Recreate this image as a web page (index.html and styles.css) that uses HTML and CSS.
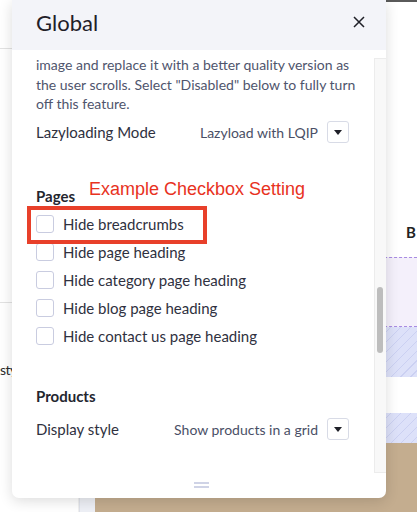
FILE: index.html
```html
<!DOCTYPE html>
<html lang="en">
<head>
    <meta charset="UTF-8">
    <title>Theme Styles - Global</title>
    <link rel="stylesheet" href="styles.css">
</head>
<body>
    <div class="page">
        <aside class="side">
            <div class="side-line top"></div>
            <div class="side-line mid"></div>
            <div class="side-text">sty</div>
        </aside>
        <div class="gutter"></div>
        <main class="preview">
            <div class="topbar"></div>
            <div class="preview-head"><span class="crumb">B</span></div>
            <div class="band dashed"></div>
            <div class="band hatch tall"></div>
            <div class="band blank"></div>
            <div class="band hatch short"></div>
            <div class="band tan"></div>
        </main>
    </div>

    <div class="panel">
        <div class="panel-header">
            <h1>Global</h1>
            <button class="close" aria-label="Close">
                <svg width="12" height="12" viewBox="0 0 12 12"><path d="M1 1 L11 11 M11 1 L1 11" stroke="#1f2028" stroke-width="1.5" fill="none"/></svg>
            </button>
        </div>

        <div class="panel-main">
            <div class="content">
                <p class="help">image and replace it with a better quality version as the user scrolls. Select "Disabled" below to fully turn off this feature.</p>

                <div class="row setting">
                    <span class="label">Lazyloading Mode</span>
                    <span class="select">Lazyload with LQIP <span class="caret"></span></span>
                </div>

                <h2 class="group pages">Pages</h2>
                <ul class="checks">
                    <li><span class="box"></span>Hide breadcrumbs</li>
                    <li><span class="box"></span>Hide page heading</li>
                    <li><span class="box"></span>Hide category page heading</li>
                    <li><span class="box"></span>Hide blog page heading</li>
                    <li><span class="box"></span>Hide contact us page heading</li>
                </ul>

                <h2 class="group products">Products</h2>
                <div class="row setting">
                    <span class="label">Display style</span>
                    <span class="select">Show products in a grid <span class="caret"></span></span>
                </div>
            </div>
            <div class="track"><div class="thumb"></div></div>
        </div>

        <div class="panel-foot"><span class="handle"></span></div>

        <!-- annotation -->
        <div class="note">Example Checkbox Setting</div>
        <div class="highlight"></div>
    </div>
</body>
</html>
```

FILE: styles.css
```css
body { margin: 0; font-family: Lato, "Noto Sans", sans-serif; background: #fff; overflow: hidden; }
.page { display: grid; grid-template-columns: 79px 16px 1fr; height: 512px; }

.side { border-right: 1px solid #f0f0f0; }
.side-line { height: 1px; background: #e2e2e2; }
.side-line.top { margin-top: 48px; }
.side-line.mid { margin-top: 253px; }
.side-text { margin: 58px 0 0 0; font-size: 14px; letter-spacing: -0.6px; color: #2a2a2a; }

.gutter { background: #eef0f6; border-left: 1px solid #dfe2ea; }

.preview { display: flex; flex-direction: column; overflow: hidden; }
.topbar { height: 2px; background: #5a5a5a; }
.preview-head { height: 255px; }
.crumb { display: block; padding: 221px 0 0 311px; font-size: 15px; font-weight: 700; color: #222; line-height: 18px; }
.band { flex: none; }
.band.dashed { height: 68px; background: #f4f0fb; border-top: 1px dashed #a88be2; border-bottom: 1px dashed #a88be2; }
.hatch { background: repeating-linear-gradient(135deg, #dde1f9 0 6px, #cbd0f2 6px 7px); }
.band.tall { height: 50px; }
.band.blank { height: 36px; }
.band.short { height: 30px; }
.band.tan { flex: 1; background: #c4ad8f; }

.panel { position: absolute; left: 12px; top: 0; width: 374px; height: 498px; background: #fff; border-radius: 0 0 7px 7px; box-shadow: 0 3px 14px rgba(0,0,0,0.14); display: flex; flex-direction: column; overflow: hidden; }
.panel-header { height: 50px; flex: none; background: #f3f4f9; display: flex; align-items: center; justify-content: space-between; padding: 0 21px 0 24px; box-sizing: border-box; }
.panel-header h1 { margin: 0 0 6px; font-size: 22px; font-weight: 400; color: #1f2028; }
.close { border: none; background: none; padding: 0; margin-bottom: 6px; display: flex; }

.panel-main { flex: 1; display: flex; min-height: 0; }
.content { flex: 1; padding: 5px 0 0 24px; color: #2f3140; }
.help { margin: 0; font-size: 14px; line-height: 19.5px; color: #4f556d; width: 320px; }

.row { display: flex; align-items: center; justify-content: space-between; height: 23px; padding-right: 25px; }
.label { font-size: 15px; }
.select { display: flex; align-items: center; gap: 9px; font-size: 14px; color: #4a4f66; }
.caret { width: 22px; height: 22px; border: 1px solid #d8dbe6; border-radius: 3px; box-sizing: border-box; display: flex; align-items: center; justify-content: center; }
.caret::after { content: ""; border-left: 4px solid transparent; border-right: 4px solid transparent; border-top: 5px solid #1f2028; }

.setting:first-of-type { margin-top: 7px; }
.group { margin: 0; font-size: 15px; font-weight: 700; line-height: 20px; color: #24262f; }
.group.pages { margin-top: 42px; }
.group.products { margin-top: 36px; }
.group.products + .row { margin-top: 12px; }

.checks { list-style: none; margin: 4px 0 0; padding: 0; }
.checks li { display: flex; align-items: center; gap: 9px; height: 28px; font-size: 15px; color: #2f3140; }
.box { width: 18px; height: 18px; border: 1px solid #c9cce0; border-radius: 3px; box-sizing: border-box; }

.track { width: 12px; flex: none; margin: 8px 0 0; background: #f8f8f8; border: 1px solid #ececec; border-right: none; box-sizing: border-box; }
.thumb { width: 6px; height: 66px; margin: 228px 0 0 2px; background: #bdbdbd; border-radius: 3px; }

.panel-foot { height: 25px; flex: none; display: flex; justify-content: center; padding-left: 5px; }
.handle { width: 15px; height: 6px; margin-top: 9px; border-top: 2px solid #cfd3e6; border-bottom: 2px solid #cfd3e6; box-sizing: border-box; }

.note { position: absolute; left: 77px; top: 179px; font-family: "Liberation Sans", Arial, sans-serif; font-size: 18px; color: #e8321e; }
.highlight { position: absolute; left: 15px; top: 206px; width: 180px; height: 38px; border: 4px solid #e8402a; box-sizing: border-box; }
```
